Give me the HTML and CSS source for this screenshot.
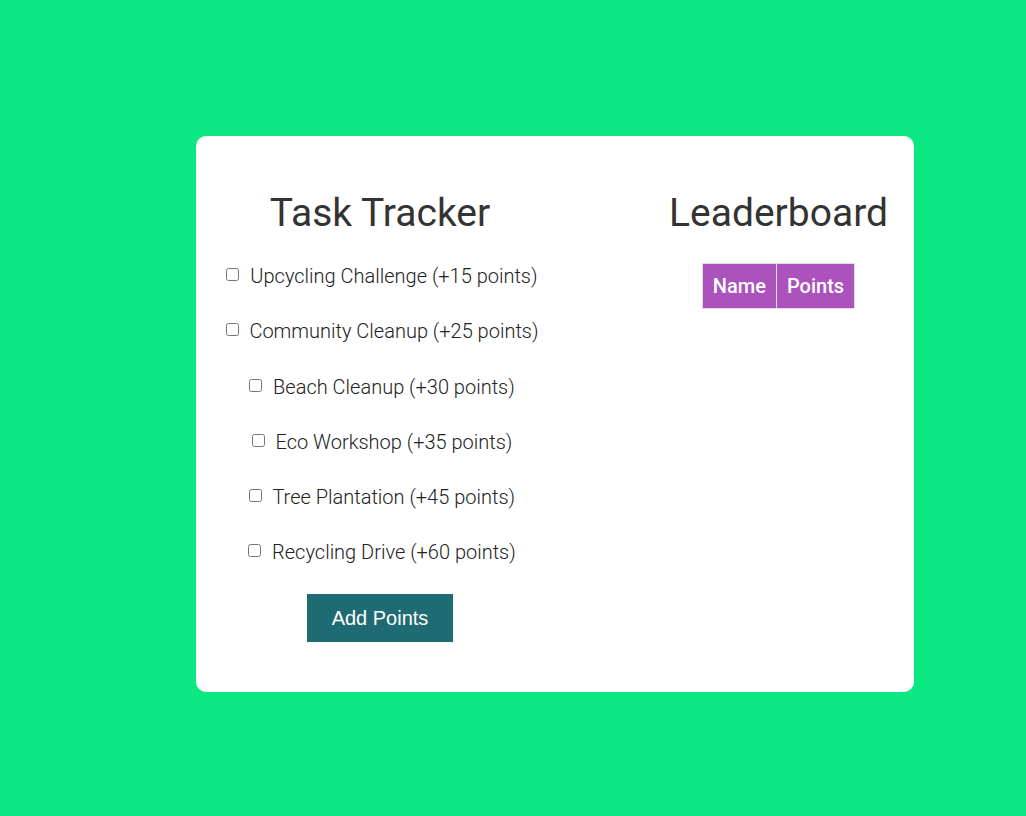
FILE: index.html
```html
<!DOCTYPE html>
<html>
<head>
<meta charset="utf-8">
<link rel="stylesheet" href="styles.css">
</head>
<body>
<div class="card">
  <section class="tasks">
    <h2 class="title">Task Tracker</h2>
    <div class="task-list">
      <label class="task"><input type="checkbox"> Upcycling Challenge (+15 points)</label>
      <label class="task"><input type="checkbox"> Community Cleanup (+25 points)</label>
      <label class="task"><input type="checkbox"> Beach Cleanup (+30 points)</label>
      <label class="task"><input type="checkbox"> Eco Workshop (+35 points)</label>
      <label class="task"><input type="checkbox"> Tree Plantation (+45 points)</label>
      <label class="task"><input type="checkbox"> Recycling Drive (+60 points)</label>
    </div>
    <button class="add-btn">Add Points</button>
  </section>
  <section class="board">
    <h2 class="title">Leaderboard</h2>
    <table class="board-table">
      <thead>
        <tr><th>Name</th><th>Points</th></tr>
      </thead>
    </table>
  </section>
</div>
</body>
</html>
```

FILE: styles.css
```css
html, body {
  margin: 0;
  padding: 0;
}
body {
  background: #0be881;
  font-family: Roboto, "Liberation Sans", sans-serif;
  color: #333;
  padding: 136px 0 0 196px;
  box-sizing: border-box;
  min-height: 816px;
}
.card {
  width: 718px;
  height: 556px;
  box-sizing: border-box;
  background: #fff;
  border-radius: 10px;
  padding: 20px 26px 0 26px;
  display: flex;
  justify-content: space-between;
  align-items: flex-start;
}
.tasks {
  width: 316px;
  display: flex;
  flex-direction: column;
  align-items: center;
}
.board {
  display: flex;
  flex-direction: column;
  align-items: center;
}
.title {
  font-family: Roboto, sans-serif;
  font-weight: 400;
  font-size: 39px;
  line-height: 47px;
  margin: 34px 0 0 0;
  color: #333;
}
.task-list {
  display: flex;
  flex-direction: column;
  align-items: center;
  gap: 32.25px;
  margin-top: 28px;
}
.task {
  font-size: 20px;
  font-weight: 300;
  line-height: 23px;
  height: 23px;
  display: block;
  text-align: center;
  color: #222;
  white-space: nowrap;
}
.task input {
  margin: 0 6px 0 4px;
  vertical-align: 2px;
}
.add-btn {
  margin-top: 30px;
  background: #1f6b73;
  color: #fff;
  border: none;
  font-family: "Liberation Sans", Arial, sans-serif;
  font-size: 20px;
  padding: 0 25px;
  height: 48px;
  cursor: pointer;
}
.board-table {
  margin-top: 26px;
  border-collapse: collapse;
}
.board-table th {
  background: #ab52bd;
  color: #fff;
  font-weight: 500;
  font-size: 20px;
  padding: 0 10px;
  height: 44px;
  border: 1px solid #ddd;
}
```
